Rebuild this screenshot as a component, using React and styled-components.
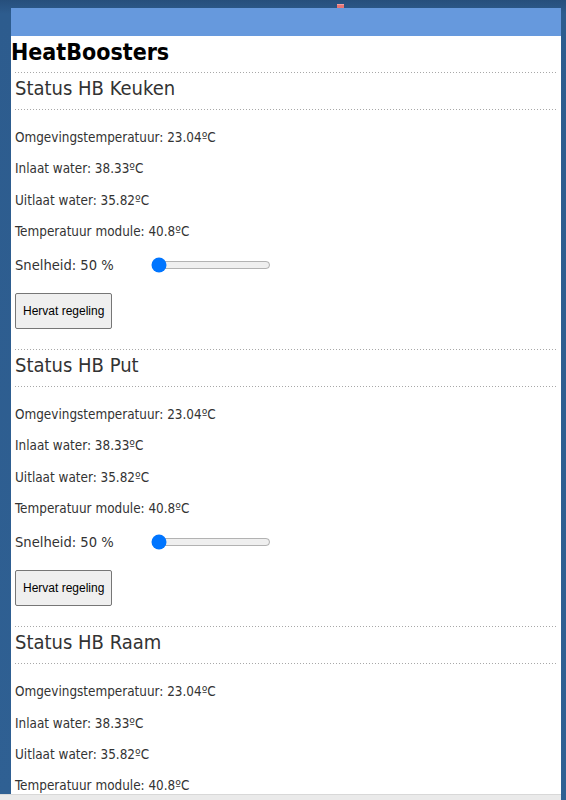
import React from "react";
import styled, { createGlobalStyle } from "styled-components";

const GlobalStyle = createGlobalStyle`
  html, body { margin: 0; padding: 0; }
  body { background: #2c5a8a; }
`;

const dots = `repeating-linear-gradient(90deg, #a8a8a8 0 1px, transparent 1px 3px)`;

const Desktop = styled.div`
  position: relative;
  height: 800px;
  overflow: hidden;
  display: flex;
  padding-right: 5px;
  box-sizing: border-box;
  background: linear-gradient(180deg, #264f7c 0px, #2d5c8e 14px, #2f6093 100%);
`;

const Column = styled.div`
  flex: 1;
  min-width: 0;
  display: flex;
  flex-direction: column;
`;

const Viewport = styled.div`
  flex: 1;
  min-height: 0;
  overflow: hidden;
  padding: 8px 0 0 11px;
`;

const BottomBar = styled.div`
  height: 5px;
  background: #eaeaea;
  border-top: 1px solid #d8d8d8;
`;

const Marker = styled.div`
  position: absolute;
  left: 337px;
  top: 4px;
  width: 7px;
  height: 4px;
  background: #e77575;
  border-top: 1px solid #f2a0a0;
  box-sizing: border-box;
`;

const Window = styled.div`
  background: #ffffff;
  min-height: 100%;
`;

const TitleBar = styled.div`
  height: 28px;
  background: #6699dd;
`;

const PageTitle = styled.h1`
  margin: 0 0 6px;
  padding: 2px 0 0 0;
  font-family: "DejaVu Sans Condensed", "DejaVu Sans", sans-serif;
  font-weight: 700;
  font-size: 23px;
  line-height: 28px;
  color: #000;
`;

const Section = styled.section`
  margin: 0 4px 20px 4px;
  padding-top: 1px;
  background: ${dots} top left / 100% 1px no-repeat;
`;

const SectionTitle = styled.h2`
  margin: 0;
  padding: 3px 0 10px;
  background: ${dots} bottom left / 100% 1px no-repeat;
  font-family: "DejaVu Sans Condensed", "DejaVu Sans", sans-serif;
  font-weight: 400;
  font-size: 20px;
  line-height: 24px;
  color: #333;
`;

const Body = styled.div`
  padding-top: 5px;
  display: flow-root;
`;

const Reading = styled.p`
  margin: 14px 0;
  font-family: "DejaVu Sans Condensed", "DejaVu Sans", sans-serif;
  font-size: 13.4px;
  line-height: 17.3px;
  color: #333;
`;

const SpeedRow = styled.div`
  margin-top: 16px;
  height: 18px;
  display: flex;
  align-items: center;
`;

const SpeedLabel = styled.span`
  width: 134px;
  font-family: "DejaVu Sans Condensed", "DejaVu Sans", sans-serif;
  font-size: 14.6px;
  line-height: 18px;
  color: #333;
`;

const Slider = styled.input`
  width: 120px;
  margin: 0 2px;
`;

const ResumeButton = styled.button`
  margin-top: 19px;
  height: 36px;
  padding: 0 7px;
  font-family: "Liberation Sans", Arial, sans-serif;
  font-size: 12px;
  color: #000;
  background: #efefef;
  border: 1px solid #767676;
  border-radius: 2px;
`;

const boosters = ["Keuken", "Put", "Raam"];

function BoosterStatus({ name }) {
  return (
    <Section>
      <SectionTitle>Status HB {name}</SectionTitle>
      <Body>
        <Reading>Omgevingstemperatuur: 23.04ºC</Reading>
        <Reading>Inlaat water: 38.33ºC</Reading>
        <Reading>Uitlaat water: 35.82ºC</Reading>
        <Reading>Temperatuur module: 40.8ºC</Reading>
        <SpeedRow>
          <SpeedLabel>Snelheid: 50 %</SpeedLabel>
          <Slider type="range" min={50} max={100} defaultValue={50} />
        </SpeedRow>
        <ResumeButton type="button">Hervat regeling</ResumeButton>
      </Body>
    </Section>
  );
}

export default function App() {
  return (
    <Desktop>
      <GlobalStyle />
      <Marker />
      <Column>
        <Viewport>
          <Window>
            <TitleBar />
            <PageTitle>HeatBoosters</PageTitle>
            {boosters.map((b) => (
              <BoosterStatus key={b} name={b} />
            ))}
          </Window>
        </Viewport>
        <BottomBar />
      </Column>
    </Desktop>
  );
}
